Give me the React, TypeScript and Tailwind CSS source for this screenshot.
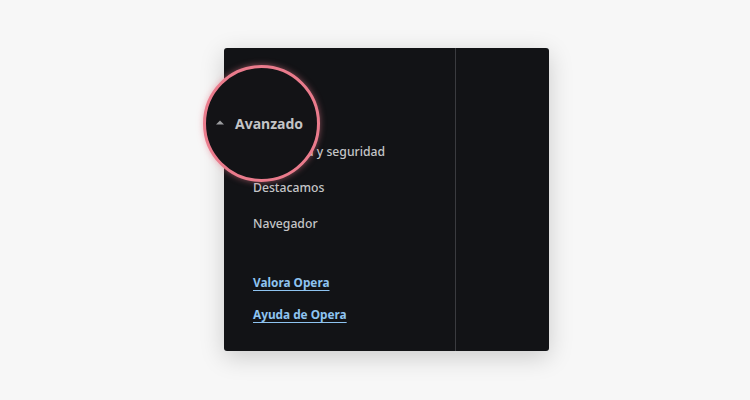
import { useState } from "react";

const menuItems = ["Privacidad y seguridad", "Destacamos", "Navegador"];
const links = ["Valora Opera", "Ayuda de Opera"];

export default function App() {
  const [active, setActive] = useState<string | null>(null);

  return (
    <div
      className="w-[750px] h-[400px] bg-[#f7f7f7] pt-[48px] pl-[224px]"
      style={{ fontFamily: '"Noto Sans", "Open Sans", sans-serif' }}
    >
      <div className="relative w-[325px] h-[303px] bg-[#121316] rounded-[3px] shadow-[0_6px_24px_rgba(0,0,0,0.18)] flex">
        {/* Sidebar */}
        <div className="w-[232px] border-r border-[#3a3b3f] pl-[29px] pt-[86px]">
          {menuItems.map(item => (
            <div
              key={item}
              onClick={() => setActive(item)}
              className={`h-[36px] flex items-center text-[12.2px] font-medium cursor-pointer ${active === item ? "text-white" : "text-[#c4c5c7]"}`}
            >
              {item}
            </div>
          ))}
          <div className="mt-[25px]">
            {links.map(link => (
              <div key={link} className="h-[32px] flex items-center">
                <a href="#" className="text-[11.8px] font-bold text-[#8ec3f0] underline underline-offset-[3px]">
                  {link}
                </a>
              </div>
            ))}
          </div>
        </div>
        <div className="flex-1" />

        {/* Zoom circle highlighting "Avanzado" */}
        <div className="absolute left-[-21px] top-[17px] w-[117px] h-[117px] rounded-full bg-[#131316] border-[3px] border-[#ea7b8c] shadow-[0_0_6px_rgba(234,123,140,0.55)] flex items-center pl-[10px] pt-[1px]">
          <svg width="8" height="5" viewBox="0 0 8 5" className="mr-[11px] mt-[-4px]">
            <path d="M0 4.5 L4 0.5 L8 4.5 Z" fill="#9d9ea1" />
          </svg>
          <span className="text-[14px] font-bold text-[#c3c4c6] leading-none">Avanzado</span>
        </div>
      </div>
    </div>
  );
}
